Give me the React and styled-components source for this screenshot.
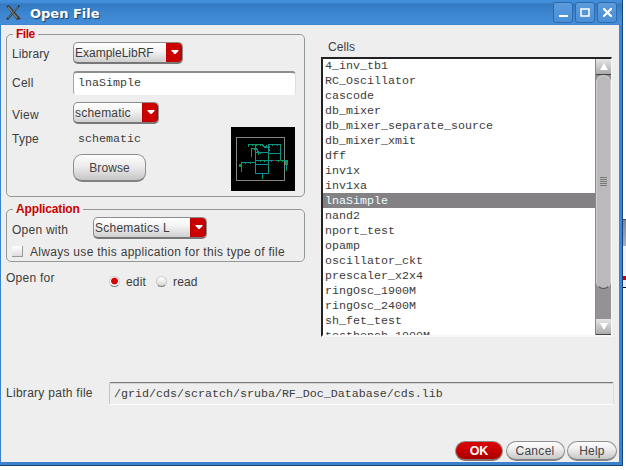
import React from "react";
import styled, { createGlobalStyle, css } from "styled-components";

const Global = createGlobalStyle`
  * { box-sizing: border-box; }
  body { margin: 0; background: #fff; overflow: hidden; }
  button, input { font: inherit; color: inherit; margin: 0; }
`;

const mono = css`
  font-family: "Liberation Mono", monospace;
  font-size: 11.67px;
  letter-spacing: 0;
`;

const Desktop = styled.div`
  display: flex;
  align-items: flex-start;
  width: 626px;
  height: 470px;
  background: #fff;
  font-family: "Liberation Sans", sans-serif;
  font-size: 12px;
  letter-spacing: 0.25px;
  color: #3c3c3c;
`;

const Window = styled.div`
  display: flex;
  flex-direction: column;
  width: 622px;
  height: 465px;
  background: #eee;
  border: solid #3a82cc;
  border-width: 0 3px 3px 1px;
  border-right-color: #3a86d4;
`;

const Frame = styled.div`
  width: 623px;
  height: 466px;
  border-right: 1px solid #164478;
  border-bottom: 1px solid #164478;
`;

const Behind = styled.div`
  width: 3px;
  height: 470px;
  background: linear-gradient(#fff 0 219px, #4a4f58 219px 220px, #7c8798 220px, #a6b0c0 246px, #f4f4f4 246px 276px, #c8000a 276px 280px, #eee 280px 287px, #111 287px 288px, #fff 288px);
`;

const TitleBar = styled.header`
  display: flex;
  align-items: center;
  height: 25px;
  margin: 0 -3px 0 -1px;
  padding: 0 5px 0 5px;
  background: linear-gradient(#4590dc 0, #3f8ad6 3px, #3279c0 4px, #3b84ce 12px, #458dd8 24px, #3a80cb 25px);
`;

const Title = styled.h1`
  flex: 1;
  margin: 2px 0 0 8px;
  font: bold 13px "DejaVu Sans", sans-serif;
  letter-spacing: 0;
  color: #fff;
  text-shadow: 1px 1px 1px #17406e;
`;

const WindowButtons = styled.div`
  display: flex;
  gap: 2px;
`;

const WindowButton = styled.button`
  width: 20px;
  height: 21px;
  padding: 0;
  border: 1px solid #2c6cac;
  border-radius: 3px;
  background: linear-gradient(#5c9bdc, #4b8fd6);
  svg { display: block; }
`;

const Body = styled.main`
  display: flex;
  flex-direction: column;
  flex: 1;
  padding: 9px 2px 1px 5px;
`;

const Columns = styled.div`
  display: flex;
  height: 348px;
`;

const LeftColumn = styled.div`
  width: 299px;
`;

const Group = styled.section`
  height: ${(p) => p.$height}px;
  margin-bottom: 12px;
  padding: 0 8px 0 5px;
  border: 1px solid #929b92;
  border-radius: 5px;
`;

const Legend = styled.h2`
  width: max-content;
  margin: -8px 0 0 1px;
  padding: 0 3px;
  font-size: 12px;
  line-height: 15px;
  font-weight: bold;
  letter-spacing: ${(p) => p.$spacing}px;
  color: #cb0000;
  background: #eee;
`;

const Row = styled.div`
  display: flex;
  align-items: center;
  height: ${(p) => p.$height}px;
  margin-bottom: ${(p) => p.$gap || 0}px;
`;

const Label = styled.label`
  flex: none;
  width: ${(p) => (p.$width ? `${p.$width}px` : "auto")};
  padding-top: ${(p) => p.$drop || 0}px;
  line-height: 15px;
  letter-spacing: ${(p) => (p.$spacing === undefined ? "0.25px" : `${p.$spacing}px`)};
  white-space: nowrap;
`;

const Combo = styled.button`
  display: flex;
  align-items: stretch;
  width: ${(p) => p.$width}px;
  height: 22px;
  padding: 0;
  overflow: hidden;
  border: 1px solid #8c8c8c;
  border-bottom: 2px solid #777;
  border-radius: 5px;
  background: linear-gradient(#fff, #f4f4f4 40%, #cfcfcf);
  text-align: left;
  letter-spacing: ${(p) => p.$spacing}px;
`;

const ComboText = styled.span`
  flex: 1;
  padding-left: 1px;
  line-height: 20px;
  white-space: nowrap;
`;

const ComboArrow = styled.span`
  display: flex;
  align-items: center;
  justify-content: center;
  width: 17px;
  margin: -1px -1px -2px 0;
  background: linear-gradient(90deg, #c50000, #cf0000 75%, #8c1010);
  border-bottom: 2px solid #8c0000;
`;

const CellInput = styled.input`
  width: 223px;
  height: 24px;
  padding: 0 4px 2px;
  border: solid;
  border-width: 2px 1px 1px;
  border-color: #8a8f8a #ddd #fff #a5a5a5;
  border-radius: 4px;
  background: #fff;
  outline: none;
  ${mono}
`;

const TypeValue = styled.span`
  padding-left: 5px;
  ${mono}
`;

const Lower = styled.div`
  display: flex;
  height: 64px;
`;

const TypeArea = styled.div`
  width: 219px;
  padding-top: 4px;
`;

const Button = styled.button`
  width: ${(p) => p.$width}px;
  height: ${(p) => p.$height || 20}px;
  padding: 0;
  border: 1px solid ${(p) => (p.$primary ? "#8f8888" : "#8e8e8e")};
  border-bottom: 2px solid ${(p) => (p.$primary ? "#8a7070" : "#828282")};
  border-radius: ${(p) => p.$radius || 10}px;
  background: ${(p) => (p.$primary ? "linear-gradient(#dc0505, #c20000 60%, #a80000)" : "linear-gradient(#fdfdfd, #ececec 45%, #c6c6c6)")};
  color: ${(p) => (p.$primary ? "#fff" : "#444")};
  font-weight: ${(p) => (p.$primary ? "bold" : "normal")};
  font-size: ${(p) => (p.$primary ? 12.5 : 12)}px;
  letter-spacing: ${(p) => p.$spacing || 0}px;
`;

const BrowseSlot = styled.div`
  padding: 7px 0 0 61px;
`;

const Checkbox = styled.span`
  width: 11px;
  height: 11px;
  margin-right: 7px;
  background: linear-gradient(#fff, #dedede);
  border: solid #999;
  border-width: 0 1px 1px 0;
`;

const Radio = styled.span`
  width: 11px;
  height: 11px;
  margin-right: 6px;
  border-radius: 50%;
  border: 1px solid #ccc;
  border-bottom-color: #777;
  background: ${(p) => (p.$on ? "radial-gradient(circle at 50% 45%, #d30000 0 3px, #fff 3.8px)" : "linear-gradient(#fff, #d6d6d6)")};
`;

const OpenFor = styled.div`
  display: flex;
  margin-top: -3px;
`;

const RadioGroup = styled.div`
  display: flex;
  align-items: center;
  height: 15px;
  margin-top: 3px;
`;

const RadioText = styled.span`
  width: ${(p) => p.$width}px;
  letter-spacing: 0.15px;
`;

const CellsColumn = styled.div`
  width: 291px;
  margin-left: 16px;
  padding-top: 5px;
`;

const CellsLabel = styled.div`
  height: 18px;
  padding-left: 7px;
  line-height: 16px;
  letter-spacing: 0.1px;
`;

const ListBox = styled.div`
  display: flex;
  width: 291px;
  height: 280px;
  border: solid;
  border-width: 2px 1px 2px 2px;
  border-color: #222 #f8f8f8 #f8f8f8 #222;
  background: #fff;
`;

const ItemList = styled.ul`
  flex: 1;
  margin: 0;
  padding: 0;
  overflow: hidden;
  list-style: none;
`;

const Item = styled.li`
  height: 15px;
  padding-left: 2px;
  line-height: 16px;
  ${mono}
  color: ${(p) => (p.$selected ? "#e8ffff" : "#3c3c3c")};
  background: ${(p) => (p.$selected ? "#838183" : "transparent")};
  &:first-child { margin-top: -1px; }
`;

const ScrollTrack = styled.div`
  display: flex;
  flex-direction: column;
  width: 16px;
  border: solid #888;
  border-width: 0 0 0 1px;
  background: #949294;
`;

const ScrollButton = styled.div`
  display: flex;
  flex: none;
  align-items: center;
  justify-content: center;
  height: 16px;
  background: linear-gradient(#e6e6e6, #aaa);
  border-bottom: 1px solid #444;
`;

const Thumb = styled.div`
  display: flex;
  flex-direction: column;
  align-items: center;
  justify-content: center;
  height: 214px;
  border: 1px solid #cfcfcf;
  border-bottom: 1px solid #555;
  border-radius: 8px;
  background: #bbb9bb;
`;

const Grip = styled.i`
  width: 7px;
  height: 1px;
  margin-bottom: 1px;
  background: #777;
`;

const Spacer = styled.div`
  flex: 1;
`;

const PathField = styled.div`
  width: 505px;
  height: 23px;
  padding-left: 4px;
  line-height: 22px;
  border: solid;
  border-width: 1px;
  border-color: #777 #ddd #fff #c4c4c4;
  border-radius: 2px;
  box-shadow: inset 0 1px #d4d4d4;
  ${mono}
`;

const Footer = styled.footer`
  display: flex;
  justify-content: flex-end;
  margin-top: 36px;
`;

const FooterButtons = styled.div`
  display: grid;
  grid-template-columns: 48px 59px 50px;
  column-gap: 2.5px;
`;

const cells = ["4_inv_tb1", "RC_Oscillator", "cascode", "db_mixer", "db_mixer_separate_source", "db_mixer_xmit", "dff", "inv1x", "inv1xa", "lnaSimple", "nand2", "nport_test", "opamp", "oscillator_ckt", "prescaler_x2x4", "ringOsc_1900M", "ringOsc_2400M", "sh_fet_test", "testbench_1900M"];

const Dropdown = ({ width, spacing, children }) => (
  <Combo $width={width} $spacing={spacing}>
    <ComboText>{children}</ComboText>
    <ComboArrow>
      <svg width="8" height="5"><path d="M.5 0h7v1L4.5 4h-1L.5 1z" fill="#fff" /></svg>
    </ComboArrow>
  </Combo>
);

const XLogo = () => (
  <svg width="17" height="18" viewBox="0 0 17 18">
    <path d="M1 2 4 1 16 15 12 16Z" fill="#3c3f42" />
    <path d="M3 3 12 14" stroke="#85827e" strokeWidth="1.2" />
    <path d="M14 1 15 2 3 16 1 15Z" fill="#30363c" />
    <path d="M13 3 3 14" stroke="#8b8e90" strokeWidth=".8" />
  </svg>
);

const dots = [[17,18],[21,17],[25,17],[29,17],[35,18],[38,22],[41,17],[46,17],[49,18],[49,26],[49,32],[37,27],[37,31],[37,38],[20,22],[23,21],[20,28],[27,26],[24,33],[29,33],[33,33],[40,33],[47,33],[51,33],[24,39],[24,44],[37,44],[31,50],[9,37],[10,43],[14,35],[19,35],[55,42],[29,25],[34,19],[38,19]];

const Schematic = () => (
  <svg width="64" height="64" shapeRendering="crispEdges">
    <rect width="64" height="64" fill="#000" />
    <rect x="5.5" y="10.500" width="48" height="43" fill="none" stroke="#858585" />
    <g fill="none" stroke="#0a9299">
      <path d="M17.5 20v-2.500h14M24.500 18v28.500h13v-29M31 17.500l3 3h3M37 17.500h12.500v16M24 25.500h13M20.500 30v-8.500h5l2 4M37 26.500h12M10 35.500h14v-2h33M24 37.500h13M31.500 47v4M10.500 36v8M55.500 34v9" />
    </g>
    <g fill="#04a04d">
      {dots.map(([x, y]) => <rect key={`${x}-${y}`} x={x} y={y} width="1" height="2" />)}
      <path d="M8 37h3v3H8zM54 34h3v4h-3z" />
    </g>
    <path d="M42 33h3v1h-3z" fill="#e40000" />
  </svg>
);

export default function App() {
  return (
    <Desktop>
      <Global />
      <Frame>
        <Window>
          <TitleBar>
            <XLogo />
            <Title>Open File</Title>
            <WindowButtons>
              <WindowButton aria-label="Minimize"><svg width="18" height="19"><path d="M5 12h9v2H5z" fill="#fff" /></svg></WindowButton>
              <WindowButton aria-label="Maximize"><svg width="18" height="19"><path d="M5 6h8v7H5z" fill="none" stroke="#fff" strokeWidth="1.5" /></svg></WindowButton>
              <WindowButton aria-label="Close"><svg width="18" height="19"><path d="m6 6 7 7m0-7-7 7" stroke="#fff" strokeWidth="2.200" strokeLinecap="round" /></svg></WindowButton>
            </WindowButtons>
          </TitleBar>
          <Body>
            <Columns>
              <LeftColumn>
                <Group $height={163}>
                  <Legend $spacing={-0.5}>File</Legend>
                  <Row $height={22} $gap={7}><Label $width={61} $drop={3} $spacing={0.1}>Library</Label><Dropdown width={110} spacing={0}>ExampleLibRF</Dropdown></Row>
                  <Row $height={24} $gap={7}><Label $width={61}>Cell</Label><CellInput defaultValue="lnaSimple" /></Row>
                  <Row $height={22} $gap={3}><Label $width={61} $drop={4}>View</Label><Dropdown width={86} spacing={0.2}>schematic</Dropdown></Row>
                  <Lower>
                    <TypeArea>
                      <Row $height={16}><Label $width={61}>Type</Label><TypeValue>schematic</TypeValue></Row>
                      <BrowseSlot><Button $width={73} $height={28} $radius={9} $spacing={0.1}>Browse</Button></BrowseSlot>
                    </TypeArea>
                    <Schematic />
                  </Lower>
                </Group>
                <Group $height={53}>
                  <Legend $spacing={-0.15}>Application</Legend>
                  <Row $height={22} $gap={5}><Label $width={81} $drop={4}>Open with</Label><Dropdown width={114} spacing={0.25}>Schematics L</Dropdown></Row>
                  <Row $height={15}><Checkbox /><Label $drop={1} $spacing={0.29}>Always use this application for this type of file</Label></Row>
                </Group>
                <OpenFor>
                  <Label $width={103}>Open for</Label>
                  <RadioGroup><Radio $on /><RadioText $width={30}>edit</RadioText><Radio /><RadioText $width={30}>read</RadioText></RadioGroup>
                </OpenFor>
              </LeftColumn>
              <CellsColumn>
                <CellsLabel>Cells</CellsLabel>
                <ListBox>
                  <ItemList>{cells.map((c) => <Item key={c} $selected={c === "lnaSimple"}>{c}</Item>)}</ItemList>
                  <ScrollTrack>
                    <ScrollButton><svg width="8" height="7"><path d="M4 0 8 7H0z" fill="#fff" /></svg></ScrollButton>
                    <Thumb><Grip /><Grip /><Grip /><Grip /><Grip /></Thumb>
                    <Spacer />
                    <ScrollButton><svg width="8" height="7"><path d="M0 0h8L4 7z" fill="#fff" /></svg></ScrollButton>
                  </ScrollTrack>
                </ListBox>
              </CellsColumn>
            </Columns>
            <Row $height={23}><Label $width={103} $spacing={0.28}>Library path file</Label><PathField>/grid/cds/scratch/sruba/RF_Doc_Database/cds.lib</PathField></Row>
            <Footer>
              <FooterButtons>
                <Button $primary $width={48}>OK</Button>
                <Button $width={59} $spacing={0.3}>Cancel</Button>
                <Button $width={50} $spacing={0.2}>Help</Button>
              </FooterButtons>
            </Footer>
          </Body>
        </Window>
      </Frame>
      <Behind />
    </Desktop>
  );
}
